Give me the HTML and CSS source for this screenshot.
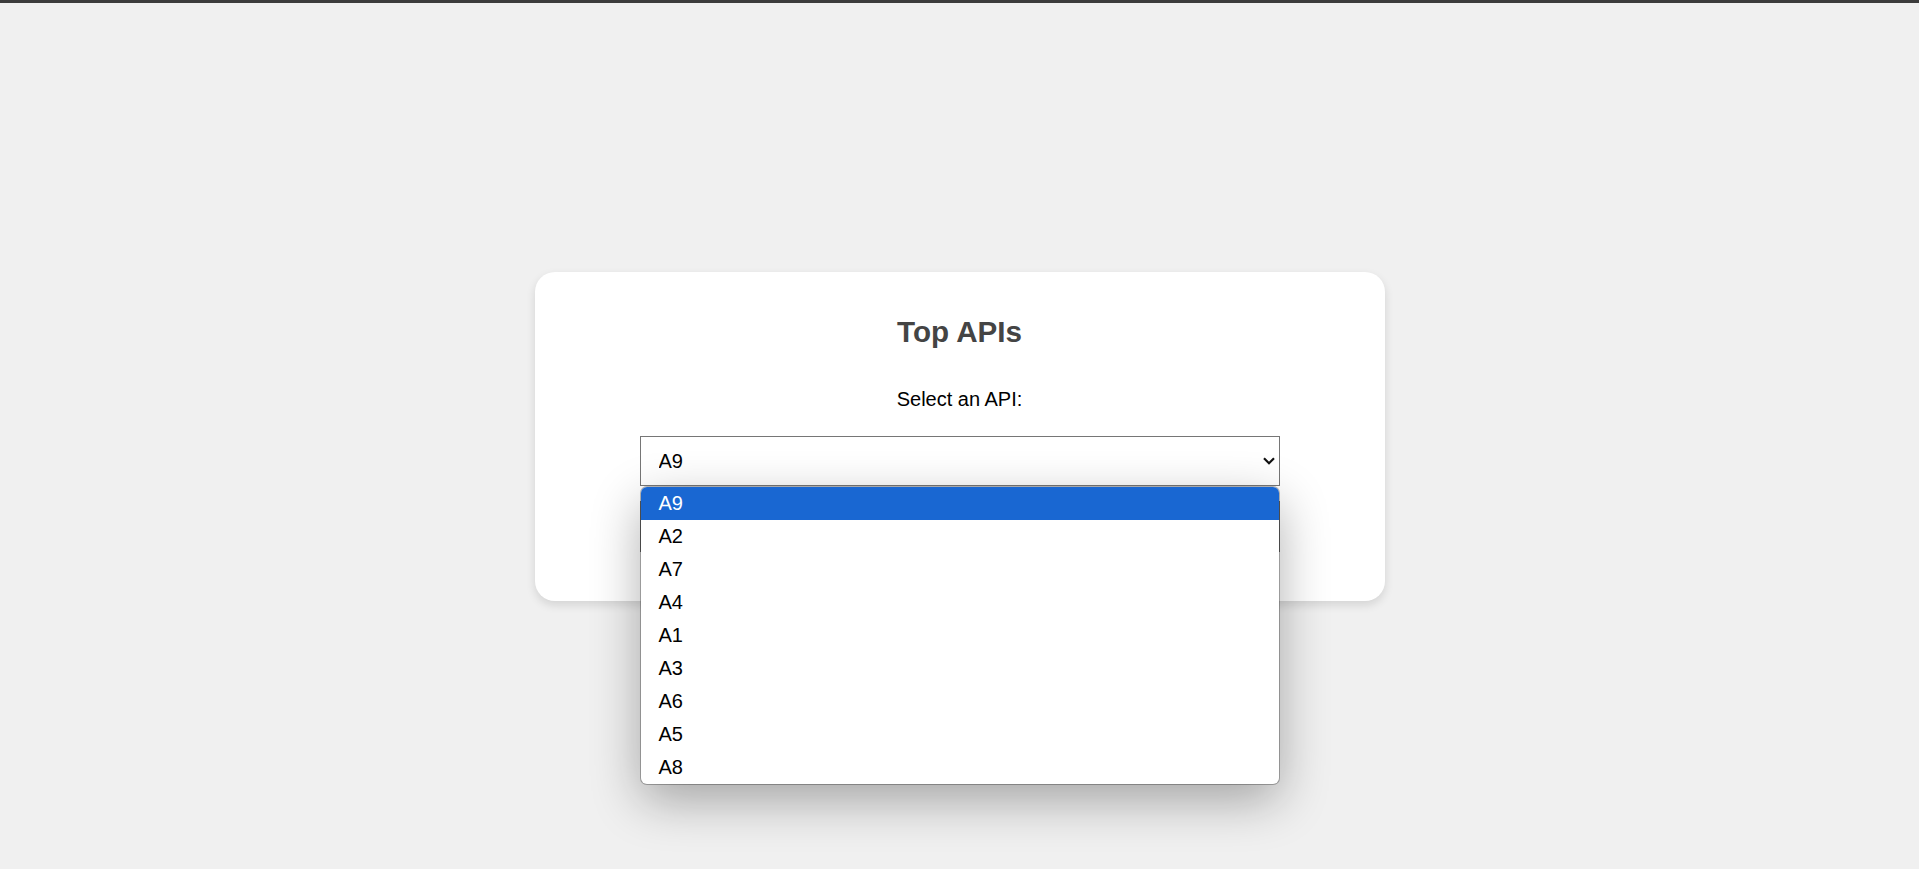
FILE: index.html
```html
<!DOCTYPE html>
<html lang="en">
<head>
<meta charset="utf-8">
<title>Top APIs</title>
<link rel="stylesheet" href="styles.css">
</head>
<body>
<div class="topbar"></div>
<main class="stage">
  <section class="card">
    <h1 class="title">Top APIs</h1>
    <label class="label" for="api">Select an API:</label>
    <div class="field">
      <select id="api" class="select">
        <option>A9</option>
        <option>A2</option>
        <option>A7</option>
        <option>A4</option>
        <option>A1</option>
        <option>A3</option>
        <option>A6</option>
        <option>A5</option>
        <option>A8</option>
      </select>
      <svg class="chevron" width="12" height="8" viewBox="0 0 12 8" aria-hidden="true"><path d="M1 1.3 L6 6.3 L11 1.3" fill="none" stroke="#111" stroke-width="2.2"/></svg>
      <ul class="popup">
        <li class="opt selected">A9</li>
        <li class="opt">A2</li>
        <li class="opt">A7</li>
        <li class="opt">A4</li>
        <li class="opt">A1</li>
        <li class="opt">A3</li>
        <li class="opt">A6</li>
        <li class="opt">A5</li>
        <li class="opt">A8</li>
      </ul>
    </div>
    <div class="behind"></div>
  </section>
</main>
</body>
</html>
```
FILE: styles.css
```css
* { box-sizing: border-box; }
html, body { margin: 0; padding: 0; height: 869px; overflow: hidden; }
body {
  background: #f0f0f0;
  font-family: "Liberation Sans", Arial, sans-serif;
  color: #000;
}
.topbar { height: 3px; background: #3c3c3c; }
.stage {
  display: flex;
  justify-content: center;
  padding-top: 269px;
}
.card {
  width: 850px;
  background: #fff;
  border-radius: 20px;
  box-shadow: 0 4px 10px rgba(0,0,0,0.12);
  padding: 43px 0 49px;
  display: flex;
  flex-direction: column;
  align-items: center;
}
.title {
  margin: 0;
  font-size: 29.6px;
  line-height: 34px;
  font-weight: bold;
  color: #444;
}
.label {
  margin-top: 39px;
  font-size: 20px;
  line-height: 23px;
}
.field {
  position: relative;
  margin-top: 25px;
  width: 640px;
}
.select {
  display: block;
  width: 640px;
  height: 50px;
  margin: 0;
  padding: 0 30px 0 18px;
  font-family: "Liberation Sans", Arial, sans-serif;
  font-size: 20px;
  color: #000;
  background: #fff;
  border: 1px solid #767676;
  border-radius: 0;
  -webkit-appearance: none;
  appearance: none;
}
.chevron {
  position: absolute;
  right: 5px;
  top: 21px;
  pointer-events: none;
}
.behind {
  margin-top: 15px;
  width: 640px;
  height: 51px;
  border: 1px solid #767676;
  background: #fff;
}
.popup {
  position: absolute;
  z-index: 5;
  top: calc(100% + 1px);
  left: 1px;
  width: 638px;
  margin: 0;
  padding: 0;
  list-style: none;
  background: #fff;
  border-radius: 6px;
  overflow: hidden;
  box-shadow: 0 0 0 1px rgba(0,0,0,0.28), 0 16px 50px rgba(0,0,0,0.32);
}
.opt {
  height: 33px;
  line-height: 33px;
  padding-left: 18px;
  font-size: 20px;
  color: #000;
}
.opt.selected {
  background: #1967d2;
  color: #fff;
}
```
